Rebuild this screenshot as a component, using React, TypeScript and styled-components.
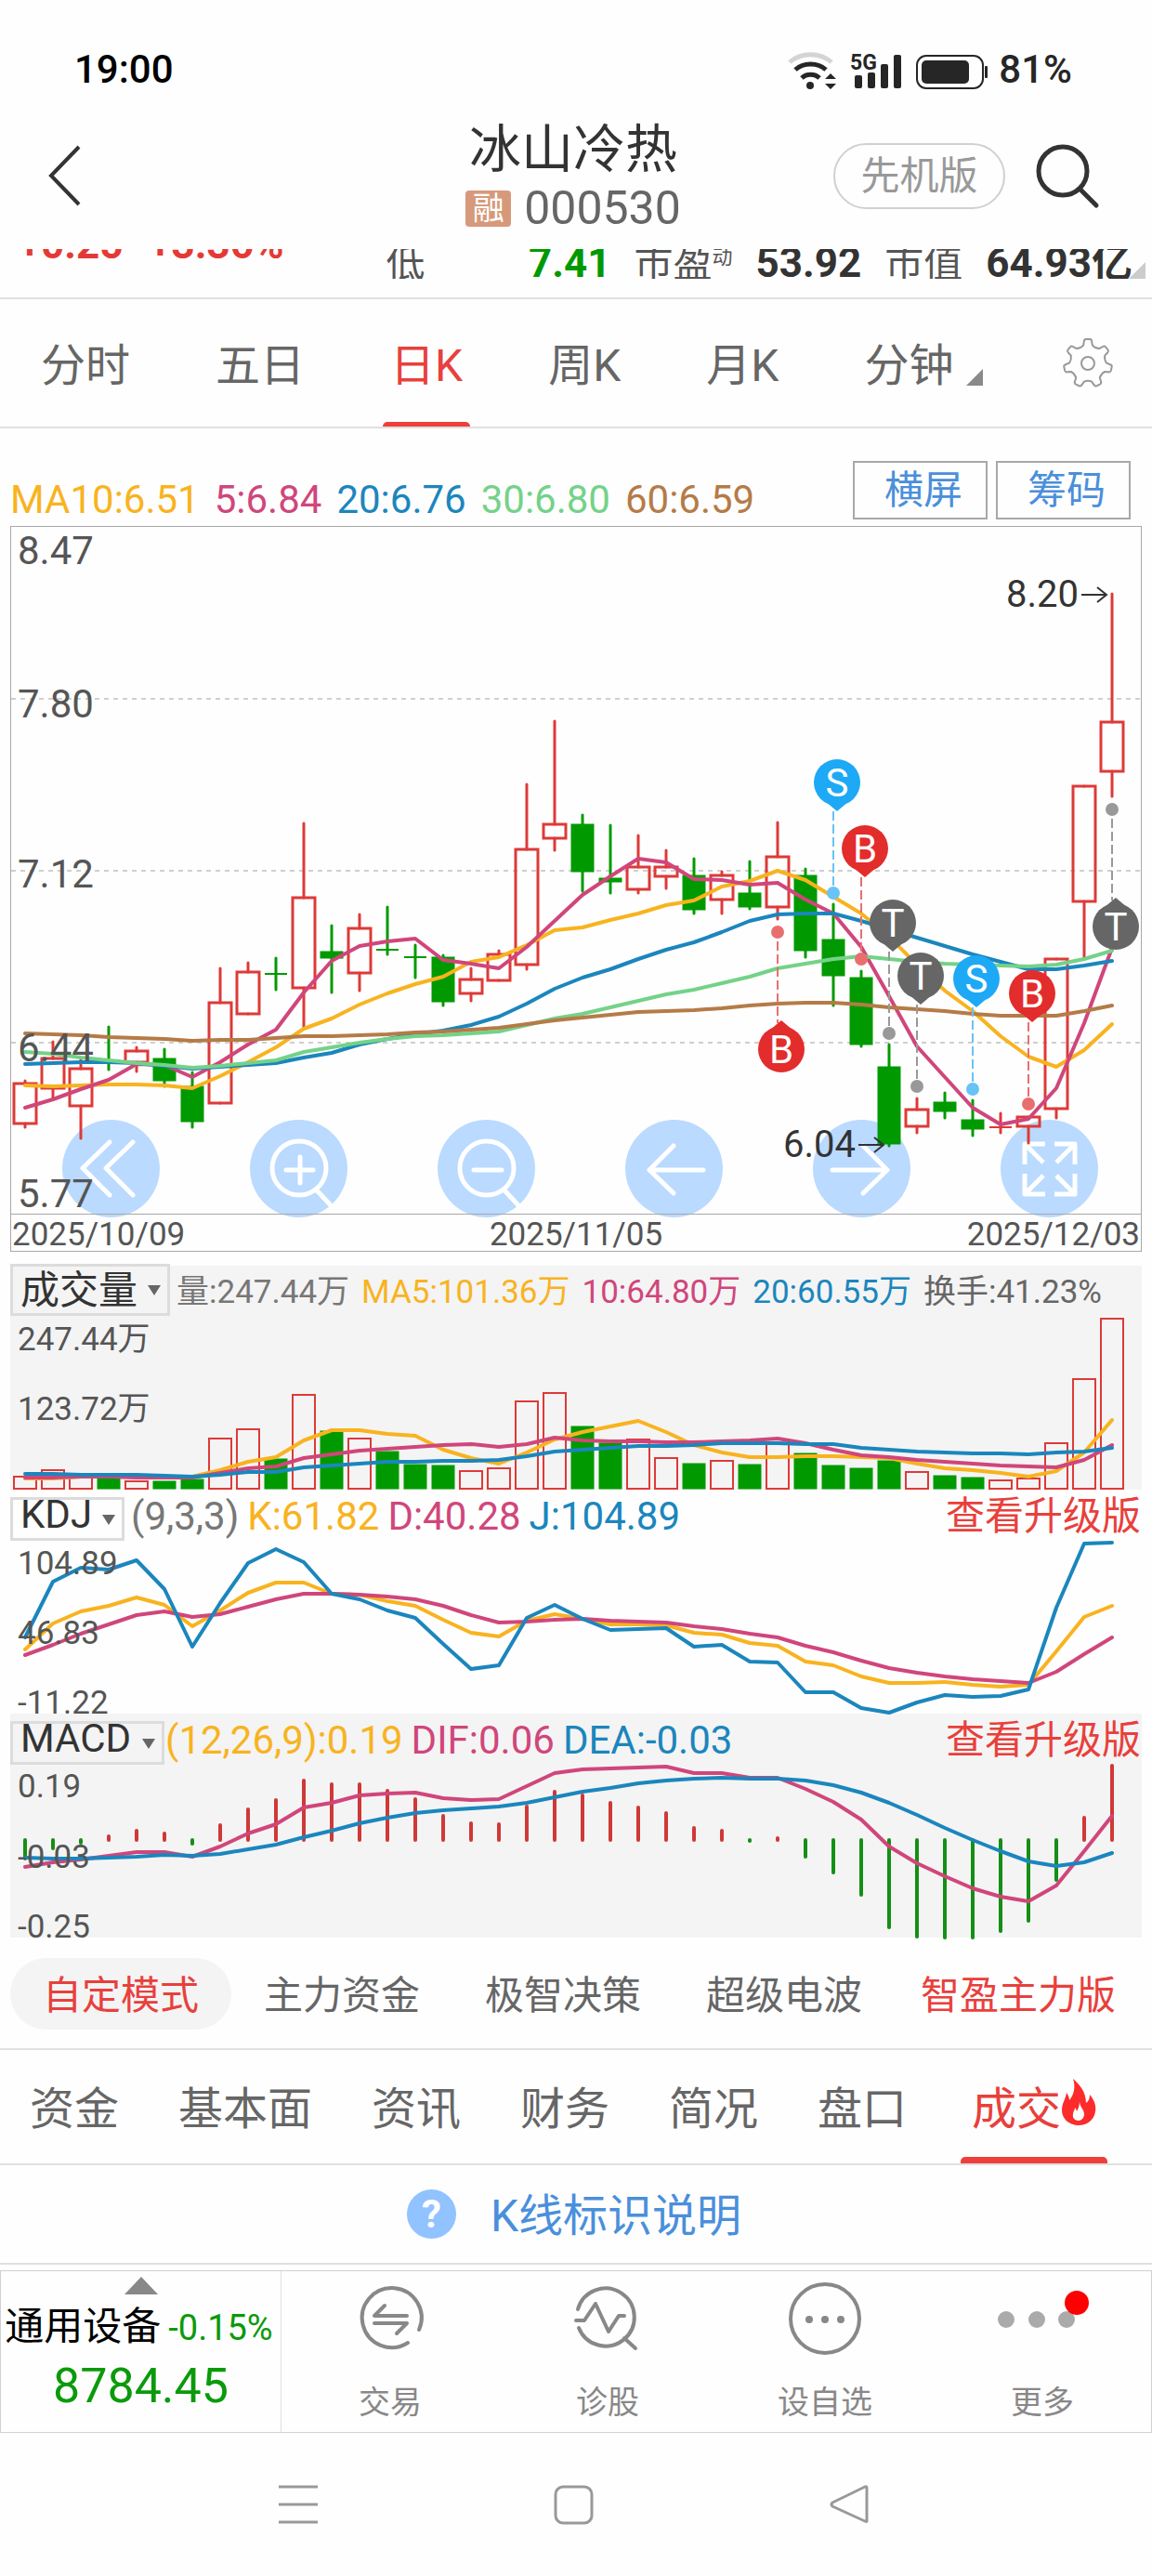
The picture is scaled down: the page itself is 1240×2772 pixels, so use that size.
import React from "react";
import styled, { createGlobalStyle } from "styled-components";

/* ---------- palette ---------- */

const c = {
  up: "#dd3a38",
  down: "#009a00",
  accent: "#e8403c",
  yellow: "#f8b31f",
  pink: "#d0467b",
  blue: "#1b86bd",
  green: "#74d288",
  brown: "#b57b47",
  link: "#4a8fdb",
  ink: "#333333",
  text: "#555555",
  muted: "#888888",
  line: "#e0e0e0",
  frame: "#a8a8a8",
  panel: "#f4f4f4",
  page: "#fefefe",
};

const Global = createGlobalStyle`
  *, *::before, *::after { box-sizing: border-box; }
  body {
    margin: 0;
    background: ${c.page};
    color: ${c.ink};
    font-family: Roboto, "Noto Sans CJK SC", sans-serif;
  }
  button, select {
    font: inherit;
    color: inherit;
    margin: 0;
    padding: 0;
    border: 0;
    background: none;
  }
  a { color: inherit; text-decoration: none; }
  svg { display: block; overflow: visible; }
`;

/* ---------- data: 40 trading days, one every 30 units ---------- */

const dayX = (i: number) => 27 + i * 30;

type Candle = [kind: "r" | "g", high: number, top: number, bottom: number, low: number];

const candles: Candle[] = [
  ["r", 1163, 1166, 1209, 1213], ["r", 1121, 1139, 1171, 1183], ["r", 1140, 1150, 1190, 1225],
  ["g", 1105, 1141, 1141, 1151], ["r", 1127, 1131, 1143, 1153], ["g", 1129, 1139, 1163, 1169],
  ["g", 1154, 1169, 1207, 1213], ["r", 1042, 1079, 1187, 1187], ["r", 1036, 1046, 1091, 1091],
  ["g", 1031, 1048, 1048, 1065], ["r", 886, 966, 1063, 1107], ["g", 996, 1024, 1031, 1068],
  ["r", 984, 999, 1047, 1066], ["g", 976, 1022, 1022, 1027], ["g", 1017, 1030, 1030, 1052],
  ["g", 1028, 1030, 1078, 1082], ["r", 1042, 1054, 1069, 1077], ["r", 1023, 1027, 1055, 1055],
  ["r", 844, 914, 1038, 1043], ["r", 776, 887, 902, 915], ["g", 877, 887, 938, 959],
  ["g", 888, 945, 949, 961], ["r", 899, 933, 957, 961], ["r", 915, 933, 943, 956],
  ["g", 924, 942, 979, 983], ["r", 938, 942, 968, 983], ["g", 927, 961, 976, 978],
  ["r", 885, 922, 976, 989], ["g", 935, 942, 1023, 1030], ["g", 973, 1011, 1050, 1082],
  ["g", 1045, 1052, 1124, 1126], ["g", 1124, 1148, 1231, 1233], ["r", 1182, 1194, 1212, 1219],
  ["g", 1176, 1186, 1196, 1203], ["g", 1184, 1205, 1215, 1222], ["r", 1198, 1213, 1213, 1219],
  ["r", 1202, 1202, 1212, 1230], ["r", 1032, 1032, 1193, 1203], ["r", 846, 846, 970, 1030],
  ["r", 639, 777, 830, 857],
];

const ma = {
  ma60: [1112, 1113, 1114, 1116, 1117, 1118, 1120, 1119, 1119, 1117, 1115, 1115, 1114, 1113, 1111, 1110, 1108, 1106, 1102, 1098, 1095, 1092, 1089, 1088, 1087, 1085, 1082, 1080, 1079, 1079, 1081, 1084, 1086, 1088, 1091, 1093, 1093, 1093, 1088, 1082],
  ma20: [1145, 1144, 1143, 1143, 1144, 1147, 1150, 1148, 1146, 1144, 1138, 1133, 1124, 1118, 1113, 1109, 1103, 1094, 1080, 1064, 1052, 1043, 1032, 1022, 1014, 1003, 991, 984, 983, 983, 991, 1000, 1009, 1018, 1027, 1035, 1043, 1043, 1039, 1034],
  ma30: [1132, 1134, 1138, 1141, 1144, 1146, 1149, 1147, 1144, 1141, 1132, 1127, 1122, 1118, 1115, 1114, 1112, 1110, 1103, 1096, 1091, 1084, 1077, 1070, 1065, 1058, 1051, 1042, 1037, 1032, 1029, 1032, 1035, 1037, 1038, 1039, 1040, 1038, 1032, 1023],
  ma10: [1168, 1169, 1168, 1167, 1167, 1168, 1171, 1158, 1143, 1127, 1107, 1096, 1081, 1069, 1059, 1051, 1035, 1030, 1017, 1001, 998, 990, 983, 974, 969, 954, 948, 937, 947, 965, 983, 1008, 1038, 1066, 1088, 1115, 1137, 1148, 1130, 1102],
  ma5: [1192, 1183, 1172, 1162, 1145, 1146, 1159, 1143, 1124, 1108, 1068, 1034, 1018, 1013, 1010, 1033, 1037, 1042, 1019, 991, 963, 943, 924, 928, 946, 947, 952, 950, 968, 983, 1019, 1072, 1126, 1159, 1192, 1210, 1204, 1171, 1101, 1020],
};

const volumeTops = [1589, 1582, 1589, 1589, 1594, 1594, 1592, 1548, 1538, 1570, 1501, 1540, 1548, 1562, 1576, 1577, 1583, 1580, 1508, 1499, 1535, 1553, 1549, 1569, 1575, 1572, 1576, 1553, 1564, 1577, 1580, 1572, 1584, 1588, 1590, 1593, 1591, 1553, 1484, 1419];
const volumeMa = {
  ma5: [1591, 1591, 1589, 1589, 1589, 1590, 1589, 1582, 1573, 1568, 1550, 1539, 1539, 1543, 1545, 1560, 1569, 1575, 1563, 1549, 1541, 1535, 1529, 1541, 1555, 1563, 1568, 1568, 1567, 1567, 1568, 1569, 1575, 1580, 1582, 1585, 1589, 1583, 1563, 1528],
  ma10: [1590, 1590, 1589, 1589, 1590, 1590, 1590, 1585, 1580, 1578, 1569, 1565, 1561, 1559, 1557, 1555, 1554, 1557, 1554, 1547, 1550, 1551, 1551, 1552, 1552, 1551, 1550, 1548, 1553, 1560, 1566, 1568, 1571, 1573, 1575, 1577, 1578, 1579, 1571, 1555],
  ma20: [1586, 1586, 1587, 1587, 1587, 1588, 1589, 1587, 1584, 1584, 1579, 1577, 1575, 1573, 1573, 1572, 1572, 1571, 1567, 1562, 1560, 1558, 1556, 1556, 1555, 1553, 1553, 1553, 1554, 1554, 1558, 1560, 1562, 1563, 1564, 1564, 1565, 1563, 1562, 1558],
};

const kdj = {
  k: [1775, 1747, 1734, 1728, 1719, 1727, 1750, 1733, 1714, 1703, 1703, 1715, 1716, 1723, 1728, 1743, 1757, 1761, 1744, 1737, 1742, 1748, 1748, 1749, 1757, 1759, 1768, 1771, 1788, 1792, 1804, 1811, 1811, 1810, 1813, 1815, 1813, 1777, 1740, 1728],
  d: [1781, 1770, 1758, 1748, 1738, 1734, 1740, 1737, 1729, 1721, 1715, 1715, 1716, 1718, 1721, 1728, 1738, 1746, 1745, 1743, 1742, 1744, 1745, 1746, 1750, 1753, 1758, 1762, 1771, 1778, 1787, 1795, 1800, 1804, 1807, 1809, 1811, 1799, 1780, 1762],
  j: [1762, 1702, 1687, 1689, 1679, 1710, 1772, 1725, 1682, 1667, 1681, 1715, 1721, 1733, 1741, 1769, 1796, 1792, 1741, 1727, 1742, 1754, 1753, 1752, 1772, 1770, 1788, 1789, 1821, 1821, 1838, 1843, 1832, 1824, 1826, 1825, 1818, 1730, 1661, 1660],
};

const macdZero = 1980;
const macdTips = [2000, 1989, 1983, 1976, 1970, 1973, 1984, 1964, 1947, 1937, 1916, 1920, 1920, 1927, 1936, 1954, 1962, 1963, 1944, 1928, 1932, 1940, 1945, 1951, 1967, 1970, 1981, 1978, 1998, 2015, 2039, 2074, 2084, 2085, 2085, 2078, 2067, 2023, 1956, 1900];
const macd = {
  dif: [2009, 2004, 2001, 1997, 1993, 1993, 1998, 1987, 1973, 1963, 1945, 1940, 1932, 1930, 1929, 1935, 1937, 1936, 1922, 1908, 1904, 1903, 1902, 1901, 1908, 1908, 1913, 1913, 1925, 1939, 1958, 1987, 2005, 2019, 2032, 2041, 2046, 2029, 1992, 1954],
  dea: [1999, 2000, 2000, 1999, 1998, 1996, 1997, 1995, 1990, 1985, 1977, 1970, 1962, 1956, 1951, 1948, 1946, 1944, 1940, 1934, 1928, 1924, 1919, 1916, 1914, 1913, 1914, 1914, 1916, 1921, 1929, 1940, 1953, 1967, 1980, 1992, 2003, 2008, 2004, 1994],
};

type Signal = { letter: "S" | "B" | "T"; day: number; cy: number; dot: number; up?: boolean };

const signals: Signal[] = [
  { letter: "B", day: 27, cy: 1129, dot: 1003, up: true },
  { letter: "S", day: 29, cy: 842, dot: 961 },
  { letter: "B", day: 30, cy: 913, dot: 1032 },
  { letter: "T", day: 31, cy: 993, dot: 1112 },
  { letter: "T", day: 32, cy: 1050, dot: 1169 },
  { letter: "S", day: 34, cy: 1053, dot: 1172 },
  { letter: "B", day: 36, cy: 1069, dot: 1188 },
  { letter: "T", day: 39, cy: 997, dot: 871, up: true },
];

const signalColor = { S: "#1da9f5", B: "#e32c2c", T: "#666666" };
const signalTint = { S: "#68c3f6", B: "#e96f6f", T: "#999999" };

/* ---------- chart parts ---------- */

const Trend = ({ ys, color }: { ys: number[]; color: string }) => (
  <polyline
    points={ys.map((y, i) => `${dayX(i)},${y}`).join(" ")}
    fill="none"
    stroke={color}
    strokeWidth={4}
    strokeLinejoin="round"
    strokeLinecap="round"
  />
);

const CandleMark = ({ data, index }: { data: Candle; index: number }) => {
  const [kind, high, top, bottom, low] = data;
  const x = dayX(index);
  const color = kind === "r" ? c.up : c.down;
  const flat = bottom === top;
  return (
    <g stroke={color} strokeLinecap="round">
      {flat ? (
        <path d={`M${x} ${high}V${low}`} strokeWidth={3} />
      ) : (
        <path d={`M${x} ${high}V${top}M${x} ${bottom}V${low}`} strokeWidth={3} />
      )}
      {flat ? (
        <path d={`M${x - 12} ${top}H${x + 12}`} strokeWidth={2} strokeLinecap="butt" />
      ) : (
        <rect
          x={x - 12}
          y={top}
          width={24}
          height={bottom - top}
          fill={kind === "r" ? "none" : color}
          strokeWidth={kind === "r" ? 3 : 1}
        />
      )}
    </g>
  );
};

const SignalMark = ({ letter, day, cy, dot, up }: Signal) => {
  const x = dayX(day);
  const cx = x + 4;
  const color = signalColor[letter];
  const tint = signalTint[letter];
  const tip = up ? cy - 31 : cy + 31;
  const base = up ? cy - 20 : cy + 20;
  return (
    <g>
      <path
        d={up ? `M${x} ${dot + 10}V${cy - 28}` : `M${x} ${dot - 8}V${cy + 26}`}
        stroke={tint}
        strokeWidth={2}
        strokeDasharray="10 4"
      />
      <circle cx={x} cy={dot} r={7} fill={tint} />
      <circle cx={cx} cy={cy} r={25} fill={color} />
      <path d={`M${cx - 13} ${base}L${cx} ${tip}L${cx + 13} ${base}Z`} fill={color} />
      <text x={cx} y={cy + 15} fontSize={42} fill="#fff" textAnchor="middle">
        {letter}
      </text>
    </g>
  );
};

const Plot = styled.svg`
  width: 100%;
  height: auto;
  position: relative;
  pointer-events: none;
  font-family: Roboto, "Noto Sans CJK SC", sans-serif;
`;

const AxisText = ({ y, size = 35, children }: { y: number; size?: number; children: string }) => (
  <text x={19} y={y} fontSize={size} fill={c.text}>
    {children}
  </text>
);

const PriceChart = () => (
  <Plot viewBox="12 567 1216 739" role="img" aria-label="日K">
    {[752, 937, 1122].map((y) => (
      <path key={y} d={`M12 ${y}H1228`} stroke="#cfcfcf" strokeWidth={2} strokeDasharray="5 5" />
    ))}
    {candles.map((d, i) => (
      <CandleMark key={i} data={d} index={i} />
    ))}
    <Trend ys={ma.ma10} color={c.yellow} />
    <Trend ys={ma.ma5} color={c.pink} />
    <Trend ys={ma.ma20} color={c.blue} />
    <Trend ys={ma.ma30} color={c.green} />
    <Trend ys={ma.ma60} color={c.brown} />
    {signals.map((s) => (
      <SignalMark key={s.day} {...s} />
    ))}
    <AxisText y={607} size={42}>8.47</AxisText>
    <AxisText y={772} size={42}>7.80</AxisText>
    <AxisText y={955} size={42}>7.12</AxisText>
    <AxisText y={1142} size={42}>6.44</AxisText>
    <AxisText y={1299} size={42}>5.77</AxisText>
    <g fill={c.ink} fontSize={40} textAnchor="end">
      <text x={1161} y={653}>8.20</text>
      <text x={921} y={1245}>6.04</text>
    </g>
    <g fill="none" stroke={c.ink} strokeWidth={2}>
      <path d="M1164 640H1191M1181 632L1191 640L1181 648" />
      <path d="M924 1232H951M941 1224L951 1232L941 1240" />
    </g>
  </Plot>
);

const VolumeChart = () => (
  <Plot viewBox="11 1418 1218 185" role="img" aria-label="成交量">
    {volumeTops.map((top, i) => {
      const rising = candles[i][0] === "r";
      return (
        <rect
          key={i}
          x={dayX(i) - 12}
          y={top}
          width={24}
          height={1602 - top}
          fill={rising ? "none" : c.down}
          stroke={rising ? c.up : c.down}
          strokeWidth={rising ? 2 : 1}
        />
      );
    })}
    <Trend ys={volumeMa.ma5} color={c.yellow} />
    <Trend ys={volumeMa.ma10} color={c.pink} />
    <Trend ys={volumeMa.ma20} color={c.blue} />
    <AxisText y={1453}>247.44万</AxisText>
    <AxisText y={1528}>123.72万</AxisText>
  </Plot>
);

const KdjChart = () => (
  <Plot viewBox="11 1659 1218 185" role="img" aria-label="KDJ">
    <Trend ys={kdj.k} color={c.yellow} />
    <Trend ys={kdj.d} color={c.pink} />
    <Trend ys={kdj.j} color={c.blue} />
    <AxisText y={1694}>104.89</AxisText>
    <AxisText y={1769}>46.83</AxisText>
    <AxisText y={1844}>-11.22</AxisText>
  </Plot>
);

const MacdChart = () => (
  <Plot viewBox="11 1900 1218 185" role="img" aria-label="MACD">
    {macdTips.map((tip, i) => (
      <path
        key={i}
        d={`M${dayX(i)} ${macdZero}V${tip}`}
        stroke={tip < macdZero ? "#cf3936" : "#158f15"}
        strokeWidth={4}
        strokeLinecap="round"
      />
    ))}
    <Trend ys={macd.dif} color={c.pink} />
    <Trend ys={macd.dea} color={c.blue} />
    <AxisText y={1934}>0.19</AxisText>
    <AxisText y={2010}>-0.03</AxisText>
    <AxisText y={2085}>-0.25</AxisText>
  </Plot>
);

/* ---------- status bar and header ---------- */

const Page = styled.div`
  background: ${c.page};
`;

const StatusBar = styled.div`
  display: flex;
  justify-content: space-between;
  padding: 50px 86px 14px 80px;
  height: 114px;
  font-size: 42px;
  line-height: 50px;
  font-weight: 500;
  color: #000;
`;

const StatusIcons = styled.div`
  display: flex;
  align-items: center;
  gap: 13px;
  color: #262626;
`;

const Header = styled.header`
  display: grid;
  grid-template-columns: 1fr auto 1fr;
  align-items: center;
  height: 154px;
  padding: 0 56px 4px 50px;
`;

const IconButton = styled.button`
  display: flex;
  cursor: pointer;
`;

const TitleBlock = styled.div`
  text-align: center;
`;

const StockName = styled.h1`
  margin: 0;
  font-size: 56px;
  line-height: 70px;
  font-weight: 400;
`;

const StockCode = styled.div`
  display: flex;
  justify-content: center;
  align-items: center;
  gap: 14px;
  font-size: 50px;
  line-height: 56px;
  color: #666;
`;

const MarginBadge = styled.span`
  width: 49px;
  height: 39px;
  border-radius: 4px;
  background: #d69a7b;
  color: #fff;
  font-size: 34px;
  line-height: 38px;
`;

const HeaderActions = styled.div`
  display: flex;
  justify-content: flex-end;
  align-items: center;
  gap: 32px;
`;

const EditionButton = styled.button`
  width: 185px;
  height: 71px;
  border: 2px solid #d0d0d0;
  border-radius: 36px;
  padding-top: 2px;
  font-size: 42px;
  line-height: 60px;
  color: #999;
`;

/* ---------- quote strip, scrolled partly under the header ---------- */

const QuoteStrip = styled.div`
  display: flex;
  align-items: flex-end;
  gap: 25px;
  height: 32px;
  margin-bottom: 20px;
  padding: 0 21px 0 20px;
  overflow: hidden;
  position: relative;
  font-size: 44px;
  line-height: 44px;
`;

const Change = styled.div`
  flex: 1;
  display: flex;
  gap: 28px;
  margin-bottom: 15px;
  font-weight: 700;
  color: #e53935;
`;

const QuoteItem = styled.div<{ $wide?: boolean }>`
  display: flex;
  align-items: baseline;
  justify-content: space-between;
  gap: 25px;
  margin-bottom: -6px;
  min-width: ${(p) => (p.$wide ? "242px" : "0")};
`;

const QuoteLabel = styled.span`
  font-size: 42px;
  color: ${c.text};
  white-space: nowrap;
`;

const Dynamic = styled.small`
  font-size: 22px;
  vertical-align: 14px;
`;

const QuoteValue = styled.span<{ $color?: string }>`
  font-weight: 700;
  color: ${(p) => p.$color ?? c.ink};
`;

const Corner = styled.i`
  position: absolute;
  right: 7px;
  bottom: 0;
  border-left: 18px solid transparent;
  border-bottom: 18px solid #cccccc;
`;

/* ---------- tab bars ---------- */

const TabBar = styled.nav<{ $height: number; $pad: string }>`
  display: flex;
  align-items: stretch;
  height: ${(p) => p.$height}px;
  padding: ${(p) => p.$pad};
  border-bottom: 2px solid ${c.line};
`;

const TabGroup = styled.div<{ $gap: number }>`
  display: flex;
  flex: 1;
  gap: ${(p) => p.$gap}px;
`;

const TopRule = styled.div`
  border-top: 2px solid ${c.line};
`;

const Tab = styled.button<{ $active?: boolean; $bar?: number; $reach?: number }>`
  position: relative;
  display: flex;
  align-items: center;
  padding-top: 6px;
  font-size: 48px;
  line-height: 60px;
  white-space: nowrap;
  cursor: pointer;
  color: ${(p) => (p.$active ? c.accent : "#666")};
  &::after {
    content: "";
    display: ${(p) => (p.$active ? "block" : "none")};
    position: absolute;
    left: -${(p) => p.$reach ?? 8}px;
    right: -${(p) => p.$reach ?? 8}px;
    bottom: 0;
    height: ${(p) => p.$bar ?? 5}px;
    border-radius: 5px 5px 0 0;
    background: #ef3f3c;
  }
`;

const IconTab = styled(Tab)`
  padding-top: 0;
`;

const MinuteCorner = styled.i`
  align-self: flex-end;
  margin: 0 0 44px 14px;
  border-left: 18px solid transparent;
  border-bottom: 18px solid #8a8a8a;
`;

const HotMark = styled.span`
  margin-bottom: 16px;
`;

/* ---------- chart area ---------- */

const Charts = styled.main`
  padding: 0 11px;
`;

const ChartHead = styled.div`
  display: flex;
  justify-content: space-between;
  align-items: flex-end;
  height: 105px;
  padding-bottom: 3px;
`;

const Legend = styled.div<{ $size?: number; $gap?: number }>`
  display: flex;
  gap: ${(p) => p.$gap ?? 9}px;
  font-size: ${(p) => p.$size ?? 42}px;
  line-height: 50px;
  white-space: nowrap;
`;

const Tint = styled.span<{ $color: string }>`
  color: ${(p) => p.$color};
`;

const ChartActions = styled.div`
  display: flex;
  gap: 9px;
  padding: 0 12px 4px 0;
`;

const BoxButton = styled.button`
  width: 145px;
  height: 63px;
  border: 2px solid ${c.frame};
  padding-left: 7px;
  font-size: 42px;
  line-height: 50px;
  color: ${c.link};
  cursor: pointer;
`;

const Frame = styled.section`
  position: relative;
  border: 1px solid ${c.frame};
`;

const ToolRow = styled.div`
  position: absolute;
  left: 55px;
  right: 46px;
  bottom: 36px;
  display: flex;
  justify-content: space-between;
`;

const ToolButton = styled.button`
  width: 105px;
  height: 105px;
  border-radius: 50%;
  background: #badaff;
  display: grid;
  place-items: center;
  cursor: pointer;
`;

const DateRow = styled.div`
  position: relative;
  display: flex;
  justify-content: space-between;
  border-top: 1px solid ${c.frame};
  padding: 0 1px;
  height: 40px;
  font-size: 35px;
  line-height: 44px;
  color: ${c.text};
`;

const Panel = styled.section<{ $shade?: boolean; $space?: number }>`
  margin-top: ${(p) => p.$space ?? 0}px;
  background: ${(p) => (p.$shade ? c.panel : "transparent")};
`;

const PanelHead = styled.div<{ $gap: number }>`
  display: flex;
  align-items: flex-start;
  gap: ${(p) => p.$gap}px;
  height: 56px;
  padding-top: 4px;
`;

const Picker = styled.label<{ $width: number; $tall?: boolean }>`
  position: relative;
  display: flex;
  align-items: flex-end;
  width: ${(p) => p.$width}px;
  height: ${(p) => (p.$tall ? 56 : 47)}px;
  margin-top: ${(p) => (p.$tall ? -6 : 4)}px;
  border: 3px solid #dcdcdc;
`;

const PickerSelect = styled.select<{ $tall?: boolean }>`
  appearance: none;
  width: 100%;
  height: 50px;
  margin-bottom: ${(p) => (p.$tall ? -1 : 0)}px;
  padding-left: 8px;
  font-size: 42px;
  line-height: 50px;
`;

const Caret = styled.i`
  position: absolute;
  right: 7px;
  top: 50%;
  margin-top: -5px;
  border: 7px solid transparent;
  border-top: 11px solid #666;
  border-bottom: 0;
  pointer-events: none;
`;

const UpgradeLink = styled.a`
  margin-left: auto;
  padding-right: 1px;
  font-size: 42px;
  line-height: 50px;
  color: ${c.accent};
`;

/* ---------- lower bars ---------- */

const Modes = styled.div`
  display: grid;
  grid-template-columns: 238fr 238fr 238fr 238fr 266fr;
  padding: 22px 11px 20px;
  border-bottom: 2px solid ${c.line};
`;

const Mode = styled.button<{ $red?: boolean; $filled?: boolean }>`
  height: 77px;
  border-radius: 39px;
  padding-top: 4px;
  background: ${(p) => (p.$filled ? c.panel : "transparent")};
  color: ${(p) => (p.$red ? c.accent : "#666")};
  font-size: 42px;
  line-height: 60px;
  white-space: nowrap;
  cursor: pointer;
`;

const HelpLink = styled.a`
  display: flex;
  justify-content: center;
  align-items: center;
  gap: 37px;
  height: 107px;
  padding-right: 4px;
  border-bottom: 2px solid ${c.line};
  font-size: 48px;
  line-height: 60px;
  color: ${c.link};
`;

const HelpText = styled.span`
  padding-top: 5px;
`;

const HelpMark = styled.span`
  width: 53px;
  height: 53px;
  border-radius: 50%;
  background: #90c3ff;
  color: #fff;
  font-size: 42px;
  font-weight: 700;
  line-height: 54px;
  text-align: center;
`;

const BottomBar = styled.footer`
  display: grid;
  grid-template-columns: 302px 1fr 1fr 1fr 1fr;
  height: 175px;
  margin-top: 6px;
  border: 1px solid #d0d0d0;
`;

const Sector = styled.a`
  display: flex;
  flex-direction: column;
  align-items: center;
  padding-top: 6px;
  border-right: 1px solid #e0e0e0;
`;

const SectorCaret = styled.i`
  border: 18px solid transparent;
  border-bottom: 19px solid #888;
  border-top: 0;
`;

const SectorName = styled.span`
  display: flex;
  align-items: baseline;
  gap: 8px;
  margin-top: 8px;
  padding-right: 4px;
  font-size: 42px;
  line-height: 54px;
  color: #000;
  white-space: nowrap;
`;

const SectorChange = styled.span`
  font-size: 38px;
  color: #0b9a0b;
`;

const SectorValue = styled.span`
  margin-top: 6px;
  font-size: 52px;
  line-height: 60px;
  color: #0b9a0b;
`;

const Action = styled.button`
  display: flex;
  flex-direction: column;
  align-items: center;
  gap: 32px;
  padding-top: 14px;
  font-size: 34px;
  line-height: 42px;
  color: ${c.muted};
  cursor: pointer;
`;

const SystemNav = styled.nav`
  display: grid;
  grid-template-columns: repeat(3, 1fr);
  align-items: center;
  justify-items: center;
  height: 154px;
  padding: 0 178px 0 173px;
`;

/* ---------- icons ---------- */

const Wifi = () => (
  <svg width="56" height="44" viewBox="0 0 56 44" fill="none" stroke="#262626" strokeWidth="5">
    <path d="M4 14C16 3 37 3 49 14" stroke="#d4d4d4" />
    <path d="M10 22C19 14 34 14 43 22" />
    <path d="M17 31C22 26 31 26 36 31" />
    <circle cx="26" cy="39" r="4" fill="#262626" stroke="none" />
    <path d="M48 26L54 32H42ZM48 43L54 37H42Z" fill="#262626" stroke="none" />
  </svg>
);

const Cellular = () => (
  <svg width="58" height="44" viewBox="0 0 58 44" fill="#262626">
    <text x="0" y="22" fontSize="23" fontWeight="700">5G</text>
    <rect x="5" y="28" width="8" height="14" rx="2" />
    <rect x="19" y="25" width="8" height="17" rx="2" />
    <rect x="33" y="16" width="8" height="26" rx="2" />
    <rect x="47" y="6" width="8" height="36" rx="2" />
  </svg>
);

const Battery = () => (
  <svg width="76" height="44" viewBox="0 0 76 44" fill="#262626">
    <rect x="1" y="7" width="71" height="35" rx="10" fill="none" stroke="#262626" strokeWidth="2" />
    <rect x="6" y="12" width="51" height="25" rx="5" />
    <rect x="74" y="18" width="3" height="13" rx="1" />
  </svg>
);

const Gear = () => {
  const at = (deg: number, r: number) => {
    const a = (deg * Math.PI) / 180;
    return `${(27 + r * Math.cos(a)).toFixed(2)} ${(27 + r * Math.sin(a)).toFixed(2)}`;
  };
  const step = 360 / 7;
  let d = "";
  for (let k = 0; k < 7; k++) {
    const a = -90 + k * step;
    d += `${k ? "L" : "M"}${at(a - 14, 20)}L${at(a - 10, 24)}Q${at(a - 9, 26)} ${at(a - 5, 26)}L${at(a + 5, 26)}Q${at(a + 9, 26)} ${at(a + 10, 24)}L${at(a + 14, 20)}Q${at(a + step / 2, 18)} ${at(a + step - 14, 20)}`;
  }
  return (
    <svg width="54" height="54" viewBox="0 0 54 54" fill="none" stroke="#999" strokeWidth="2" strokeLinejoin="round">
      <path d={d + "Z"} />
      <circle cx="27" cy="27" r="7" />
    </svg>
  );
};

const Flame = () => (
  <svg width="38" height="50" viewBox="0 0 38 50">
    <path
      d="M13 0C20 6 27 14 27 26C30 24 31 21 31 17C36 23 38 29 37 35C36 44 28 50 19 50C9 50 1 43 1 34C1 26 5 22 6 15C8 18 9 20 9 23C14 17 16 9 13 0Z"
      fill="#fd2b2b"
    />
    <path d="M20 24C20 30 25 33 25 38C25 42 22 45 19 45C15 45 12 42 13 38C13 35 15 34 15 31C16 32 17 34 17 35C19 32 20 28 20 24Z" fill={c.page} />
  </svg>
);

const toolIcons: { name: string; shape: React.ReactNode }[] = [
  { name: "快退", shape: <path d="M51 24L22 52L51 81M76 24L47 52L76 81" /> },
  {
    name: "放大",
    shape: (
      <>
        <circle cx="53" cy="52" r="29" />
        <path d="M39 54H68M54 40V68M72 76L87 92" />
      </>
    ),
  },
  {
    name: "缩小",
    shape: (
      <>
        <circle cx="53" cy="52" r="29" />
        <path d="M39 54H69M72 76L87 92" />
      </>
    ),
  },
  { name: "左移", shape: <path d="M52 28L26 54L52 79M26 54H84" /> },
  { name: "右移", shape: <path d="M54 28L80 54L54 79M80 54H21" /> },
  {
    name: "全屏",
    shape: (
      <path
        strokeLinecap="butt"
        d="M48 26H26V48M26 26L46 46M58 26H80V48M80 26L60 46M26 58V80H48M26 80L46 60M80 58V80H58M80 80L60 60"
      />
    ),
  },
];

const ActionIcon = ({ kind }: { kind: number }) => (
  <svg width="74" height="74" viewBox="0 0 74 74" fill="none" stroke="#888" strokeWidth="4" strokeLinecap="round" strokeLinejoin="round">
    {kind === 0 && <path d="M56 63A32 32 0 1 1 68 49M55 34H20L31 23M20 42H55L44 53" />}
    {kind === 1 && <path d="M5 27A31 31 0 1 1 6 47M55 58L67 69M3 39H12L24 21L38 51L49 34H55" />}
    {kind === 2 && (
      <>
        <circle cx="37" cy="37" r="37" />
        <g fill="#888" stroke="none">
          <circle cx="20" cy="38" r="4" />
          <circle cx="37" cy="38" r="4" />
          <circle cx="54" cy="38" r="4" />
        </g>
      </>
    )}
    {kind === 3 && (
      <g stroke="none" fill="#aaa">
        <circle cx="-2" cy="38" r="9" />
        <circle cx="31" cy="38" r="9" />
        <circle cx="63" cy="38" r="9" />
        <circle cx="74" cy="20" r="13" fill="#ff0000" />
      </g>
    )}
  </svg>
);

/* ---------- page ---------- */

type IndicatorProps = { name: string; width: number; tall?: boolean };

const Indicator = ({ name, width, tall }: IndicatorProps) => (
  <Picker $width={width} $tall={tall}>
    <PickerSelect $tall={tall} aria-label={name} defaultValue={name}>
      <option>{name}</option>
    </PickerSelect>
    <Caret />
  </Picker>
);

export default function App() {
  return (
    <Page>
      <Global />
      <StatusBar>
        <span>19:00</span>
        <StatusIcons>
          <Wifi />
          <Cellular />
          <Battery />
          <span>81%</span>
        </StatusIcons>
      </StatusBar>

      <Header>
        <IconButton aria-label="返回">
          <svg width="40" height="68" viewBox="0 0 40 68" fill="none" stroke="#333" strokeWidth="4">
            <path d="M35 3L5 34L35 65" />
          </svg>
        </IconButton>
        <TitleBlock>
          <StockName>冰山冷热</StockName>
          <StockCode>
            <MarginBadge>融</MarginBadge>
            000530
          </StockCode>
        </TitleBlock>
        <HeaderActions>
          <EditionButton>先机版</EditionButton>
          <IconButton aria-label="搜索">
            <svg width="70" height="70" viewBox="0 0 70 70" fill="none" stroke="#333" strokeWidth="5" strokeLinecap="round">
              <circle cx="30" cy="30" r="26" />
              <path d="M49 50L66 67" />
            </svg>
          </IconButton>
        </HeaderActions>
      </Header>

      <QuoteStrip>
        <Change>
          <span>+0.25</span>
          <span>+3.36%</span>
        </Change>
        <QuoteItem $wide>
          <QuoteLabel>低</QuoteLabel>
          <QuoteValue $color={c.down}>7.41</QuoteValue>
        </QuoteItem>
        <QuoteItem>
          <QuoteLabel>
            市盈<Dynamic>动</Dynamic>
          </QuoteLabel>
          <QuoteValue>53.92</QuoteValue>
        </QuoteItem>
        <QuoteItem>
          <QuoteLabel>市值</QuoteLabel>
          <QuoteValue>64.93亿</QuoteValue>
        </QuoteItem>
        <Corner />
      </QuoteStrip>

      <TopRule />
      <TabBar $height={139} $pad="0 42px 0 44px">
        <TabGroup $gap={92}>
          <Tab>分时</Tab>
          <Tab>五日</Tab>
          <Tab $active>日K</Tab>
          <Tab>周K</Tab>
          <Tab>月K</Tab>
          <Tab>
            分钟
            <MinuteCorner />
          </Tab>
        </TabGroup>
        <IconTab aria-label="设置">
          <Gear />
        </IconTab>
      </TabBar>

      <Charts>
        <ChartHead>
          <Legend $gap={16}>
            <Tint $color={c.yellow}>MA10:6.51</Tint>
            <Tint $color={c.pink}>5:6.84</Tint>
            <Tint $color={c.blue}>20:6.76</Tint>
            <Tint $color={c.green}>30:6.80</Tint>
            <Tint $color={c.brown}>60:6.59</Tint>
          </Legend>
          <ChartActions>
            <BoxButton>横屏</BoxButton>
            <BoxButton>筹码</BoxButton>
          </ChartActions>
        </ChartHead>

        <Frame>
          <ToolRow>
            {toolIcons.map((t) => (
              <ToolButton key={t.name} aria-label={t.name}>
                <svg width="105" height="105" viewBox="0 0 105 105" fill="none" stroke="#fff" strokeWidth="5" strokeLinecap="round" strokeLinejoin="round">
                  {t.shape}
                </svg>
              </ToolButton>
            ))}
          </ToolRow>
          <PriceChart />
          <DateRow>
            <span>2025/10/09</span>
            <span>2025/11/05</span>
            <span>2025/12/03</span>
          </DateRow>
        </Frame>

        <Panel $shade $space={15}>
          <PanelHead $gap={7}>
            <Indicator name="成交量" width={172} tall />
            <Legend $size={35} $gap={13}>
              <Tint $color="#777">量:247.44万</Tint>
              <Tint $color={c.yellow}>MA5:101.36万</Tint>
              <Tint $color={c.pink}>10:64.80万</Tint>
              <Tint $color={c.blue}>20:60.55万</Tint>
              <Tint $color="#666">换手:41.23%</Tint>
            </Legend>
          </PanelHead>
          <VolumeChart />
        </Panel>

        <Panel>
          <PanelHead $gap={7}>
            <Indicator name="KDJ" width={123} />
            <Legend>
              <Tint $color="#777">(9,3,3)</Tint>
              <Tint $color={c.yellow}>K:61.82</Tint>
              <Tint $color={c.pink}>D:40.28</Tint>
              <Tint $color={c.blue}>J:104.89</Tint>
            </Legend>
            <UpgradeLink href="#kdj">查看升级版</UpgradeLink>
          </PanelHead>
          <KdjChart />
        </Panel>

        <Panel $shade>
          <PanelHead $gap={1}>
            <Indicator name="MACD" width={166} />
            <Legend>
              <Tint $color={c.yellow}>(12,26,9):0.19</Tint>
              <Tint $color={c.pink}>DIF:0.06</Tint>
              <Tint $color={c.blue}>DEA:-0.03</Tint>
            </Legend>
            <UpgradeLink href="#macd">查看升级版</UpgradeLink>
          </PanelHead>
          <MacdChart />
        </Panel>
      </Charts>

      <Modes>
        <Mode $red $filled>自定模式</Mode>
        <Mode>主力资金</Mode>
        <Mode>极智决策</Mode>
        <Mode>超级电波</Mode>
        <Mode $red>智盈主力版</Mode>
      </Modes>

      <TabBar $height={124} $pad="0 60px 0 32px">
        <TabGroup $gap={64}>
          <Tab>资金</Tab>
          <Tab>基本面</Tab>
          <Tab>资讯</Tab>
          <Tab>财务</Tab>
          <Tab>简况</Tab>
          <Tab>盘口</Tab>
        </TabGroup>
        <Tab $active $bar={7} $reach={12}>
          成交
          <HotMark>
            <Flame />
          </HotMark>
        </Tab>
      </TabBar>

      <HelpLink href="#help">
        <HelpMark>?</HelpMark>
        <HelpText>K线标识说明</HelpText>
      </HelpLink>

      <BottomBar>
        <Sector href="#sector">
          <SectorCaret />
          <SectorName>
            通用设备<SectorChange>-0.15%</SectorChange>
          </SectorName>
          <SectorValue>8784.45</SectorValue>
        </Sector>
        {["交易", "诊股", "设自选", "更多"].map((label, i) => (
          <Action key={label}>
            <ActionIcon kind={i} />
            {label}
          </Action>
        ))}
      </BottomBar>

      <SystemNav>
        <IconButton aria-label="任务">
          <svg width="42" height="42" viewBox="0 0 42 42" stroke="#999" strokeWidth="3">
            <path d="M0 2H42M0 21H42M0 40H42" />
          </svg>
        </IconButton>
        <IconButton aria-label="主屏幕">
          <svg width="42" height="42" viewBox="0 0 42 42" fill="none" stroke="#999" strokeWidth="3">
            <rect x="2" y="2" width="39" height="39" rx="8" />
          </svg>
        </IconButton>
        <IconButton aria-label="后退">
          <svg width="42" height="42" viewBox="0 0 42 42" fill="none" stroke="#999" strokeWidth="3" strokeLinejoin="round">
            <path d="M40 3V39Q40 40 38 39L3 23Q1 21 3 19L38 2Q40 1 40 3Z" />
          </svg>
        </IconButton>
      </SystemNav>
    </Page>
  );
}
